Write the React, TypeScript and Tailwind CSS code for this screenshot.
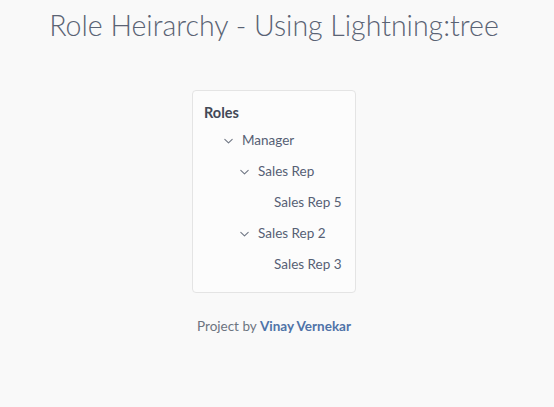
import React from "react";

const Chevron = () => (
  <svg width="9" height="8" viewBox="0 0 9 8" className="shrink-0">
    <path d="M0.8 2.3 L4.5 5.8 L8.2 2.3" fill="none" stroke="#707784" strokeWidth="1.1" strokeLinecap="round" strokeLinejoin="round" />
  </svg>
);

const Row = ({ indent, label, chevron }: { indent: string; label: string; chevron?: boolean }) => (
  <div className={`flex items-center h-[31px] ${indent}`}>
    {chevron ? <Chevron /> : <span className="w-[9px]" />}
    <span className="ml-[9px]">{label}</span>
  </div>
);

export default function App() {
  return (
    <div className="w-[554px] h-[407px] bg-[#f9f9f9]" style={{ fontFamily: "Lato, 'Open Sans', sans-serif" }}>
      <div className="w-[548px] flex flex-col items-center">
        <h1 className="mt-[8px] text-[28.5px] leading-[34px] font-light text-[#5a6374]">Role Heirarchy - Using Lightning:tree</h1>
        <div className="mt-[48px] w-[164px] h-[203px] bg-[#fcfcfc] border border-[#e4e4e4] rounded-[4px] px-[11px] pt-[12px] text-[13.5px] text-[#566074]">
          <div className="font-bold text-[14.5px] text-[#434957] leading-[20px]">Roles</div>
          <div className="mt-[2px]">
            <Row indent="pl-[20px]" label="Manager" chevron />
            <Row indent="pl-[36px]" label="Sales Rep" chevron />
            <Row indent="pl-[52px]" label="Sales Rep 5" />
            <Row indent="pl-[36px]" label="Sales Rep 2" chevron />
            <Row indent="pl-[52px]" label="Sales Rep 3" />
          </div>
        </div>
        <div className="mt-[23px] text-[13.5px] text-[#6d7480]">
          Project by <span className="font-bold text-[#4f73a8]">Vinay Vernekar</span>
        </div>
      </div>
    </div>
  );
}
